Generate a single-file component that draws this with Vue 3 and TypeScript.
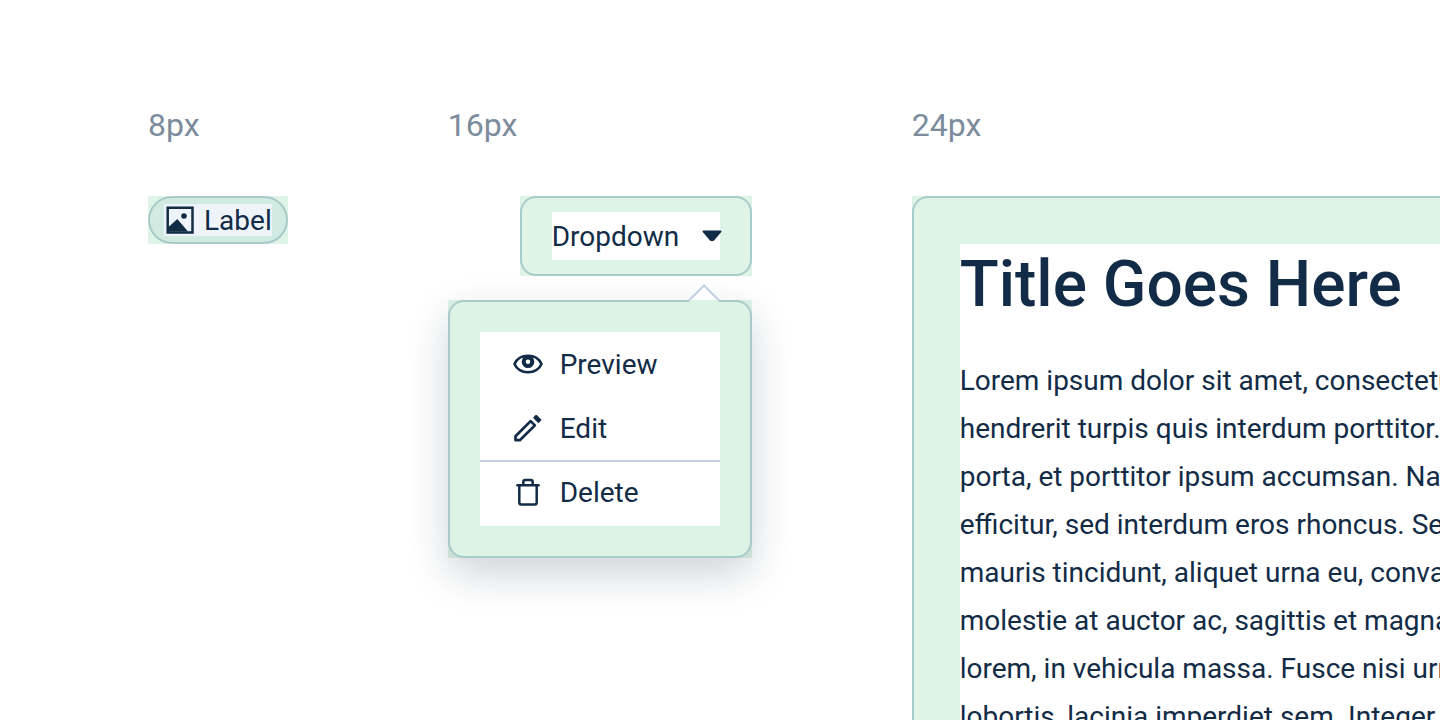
<script setup lang="ts">
import { ref } from 'vue'

interface MenuItem {
  id: 'preview' | 'edit' | 'delete'
  text: string
}

const items: MenuItem[] = [
  { id: 'preview', text: 'Preview' },
  { id: 'edit', text: 'Edit' },
  { id: 'delete', text: 'Delete' },
]

const lines: string[] = [
  'Lorem ipsum dolor sit amet, consectetur',
  'hendrerit turpis quis interdum porttitor. Sed',
  'porta, et porttitor ipsum accumsan. Nam',
  'efficitur, sed interdum eros rhoncus. Sed',
  'mauris tincidunt, aliquet urna eu, convallis',
  'molestie at auctor ac, sagittis et magna',
  'lorem, in vehicula massa. Fusce nisi urna',
  'lobortis, lacinia imperdiet sem. Integer',
]

const open = ref(true)
</script>

<template>
  <main class="page">
    <section class="example">
      <h2 class="size">8px</h2>
      <div class="inset">
        <div class="pill">
          <span class="pill-content">
            <svg width="32" height="32" viewBox="0 0 32 32" aria-hidden="true">
              <path fill="none" stroke="currentColor" stroke-width="2.500" d="M3.700 3.700h24.800v24.800H3.700z" />
              <path fill="currentColor" d="M4 27.500v-4L13.300 15 24 27.500z" />
              <circle cx="20" cy="12" r="2.800" fill="currentColor" />
            </svg>
            <span class="caption">Label</span>
          </span>
        </div>
      </div>
    </section>

    <section class="example dropdown">
      <h2 class="size">16px</h2>
      <div class="inset trigger-inset">
        <button class="trigger" type="button" :aria-expanded="open" @click="open = !open">
          <span class="trigger-content">
            <span class="caption">Dropdown</span>
            <svg class="caret" width="20" height="12" viewBox="0 0 20 12" aria-hidden="true">
              <path fill="currentColor" d="M1.500.4h17q1.300.2.800 1.600L12 10.500q-2 1.600-4 0L.7 2Q.2.600 1.500.4z" />
            </svg>
          </span>
        </button>
      </div>
      <div v-if="open" class="inset menu-inset">
        <div class="menu">
          <div class="menu-list">
            <button v-for="item in items" :key="item.id" type="button" class="item" :class="item.id">
              <svg v-if="item.id === 'preview'" width="32" height="32" viewBox="0 0 32 32" fill="none" stroke="currentColor" aria-hidden="true">
                <path stroke-width="2.600" stroke-linejoin="round" d="M2.500 16C5 10.500 10 7.800 16 7.800S27 10.500 29.500 16C27 21.500 22 24.200 16 24.200S5 21.500 2.500 16z" />
                <circle cx="16" cy="13.700" r="4.300" stroke-width="4" />
              </svg>
              <svg v-else-if="item.id === 'edit'" width="32" height="32" viewBox="0 0 32 32" aria-hidden="true">
                <path fill="none" stroke="currentColor" stroke-width="2.700" stroke-linejoin="round" d="M3.500 24.200L18.600 9.100l4.300 4.300L7.800 28.200H3.500z" />
                <path fill="currentColor" d="M21 5.800L23.500 3l1.300.1 4.200 4.200.1 1.300-2.700 2.600z" />
              </svg>
              <svg v-else width="32" height="32" viewBox="0 0 32 32" fill="none" stroke="currentColor" stroke-width="2.500" aria-hidden="true">
                <path stroke-linecap="round" d="M5.500 9.300h21" />
                <path stroke-linejoin="round" d="M7.300 9.500v17q0 2 2 2h13.400q2 0 2-2v-17M11.300 9V6q0-2 2-2h5.400q2 0 2 2v3" />
              </svg>
              <span class="caption">{{ item.text }}</span>
            </button>
          </div>
        </div>
        <svg class="pointer" width="32" height="18" viewBox="0 0 32 18" aria-hidden="true">
          <path fill="#fff" d="M1 16L16 1l15 15z" />
          <path fill="#ddf3e6" d="M1 16h30v2H1z" />
          <path fill="none" stroke="#c3cfe0" stroke-width="2" d="M.500 17L16 1.500 31.500 17" />
        </svg>
      </div>
    </section>

    <section class="example article-example">
      <h2 class="size">24px</h2>
      <div class="inset">
        <div class="card">
          <article class="article">
            <h1 class="title">Title Goes Here</h1>
            <p class="text">
              <span v-for="line in lines" :key="line" class="line">{{ line }}</span>
            </p>
          </article>
        </div>
      </div>
    </section>
  </main>
</template>

<style>
body {
  margin: 0;
  background: #fff;
}
</style>

<style scoped>
.page {
  box-sizing: border-box;
  display: flex;
  align-items: flex-start;
  gap: 160px;
  height: 100vh;
  padding: 101px 0 0 148px;
  overflow: hidden;
  color: #122b46;
  font: 400 28px/32px Roboto, "Liberation Sans", sans-serif;
}

.example {
  display: flex;
  flex: none;
  flex-direction: column;
  align-items: flex-start;
}

.size {
  margin: 0 0 47px;
  color: #7b8c9c;
  font-size: 32px;
  font-weight: 400;
  line-height: 48px;
}

.inset {
  background: #dff4e7;
}

.pill {
  padding: 6px 14px;
  border: 2px solid #a8cbc9;
  border-radius: 24px;
  background: #d2ebe2;
}

.pill-content {
  display: flex;
  align-items: center;
  gap: 8px;
  height: 32px;
  background: #eff4fa;
}

.caption {
  padding-top: 2px;
}

.dropdown {
  align-items: stretch;
  width: 304px;
}

.trigger-inset {
  position: relative;
  z-index: 1;
  align-self: flex-end;
}

button {
  color: inherit;
  font: inherit;
  cursor: pointer;
}

.trigger {
  display: block;
  padding: 14px 30px;
  border: 2px solid #a8cbc9;
  border-radius: 16px;
  background: #dff4e7;
}

.trigger-content {
  display: flex;
  align-items: center;
  justify-content: space-between;
  width: 168px;
  height: 48px;
  background: #fff;
}

.caret {
  margin-right: -2px;
}

.menu-inset {
  position: relative;
  margin-top: 24px;
}

.menu {
  padding: 30px;
  border: 2px solid #a8cbc9;
  border-radius: 16px;
  background: #ddf3e6;
  box-shadow: 0 16px 40px rgba(16, 36, 55, 0.2);
}

.menu-list {
  background: #fff;
}

.item {
  box-sizing: border-box;
  display: flex;
  align-items: center;
  gap: 16px;
  width: 100%;
  height: 64px;
  padding: 0 32px;
  border: 0;
  background: none;
  text-align: left;
}

.delete {
  height: 66px;
  padding-bottom: 4px;
  border-top: 2px solid #c3cfe0;
}

.pointer {
  position: absolute;
  top: -16px;
  right: 32px;
}

.article-example {
  flex: 1 0 auto;
}

.card {
  padding: 46px;
  border: 2px solid #a8cbc9;
  border-radius: 16px;
}

.article {
  padding-top: 1px;
  background: #fff;
}

.title {
  margin: 0 0 32px;
  font-size: 64px;
  font-weight: 500;
  line-height: 80px;
}

.text {
  margin: 0;
  line-height: 48px;
  white-space: nowrap;
}

.line {
  display: block;
}
</style>
